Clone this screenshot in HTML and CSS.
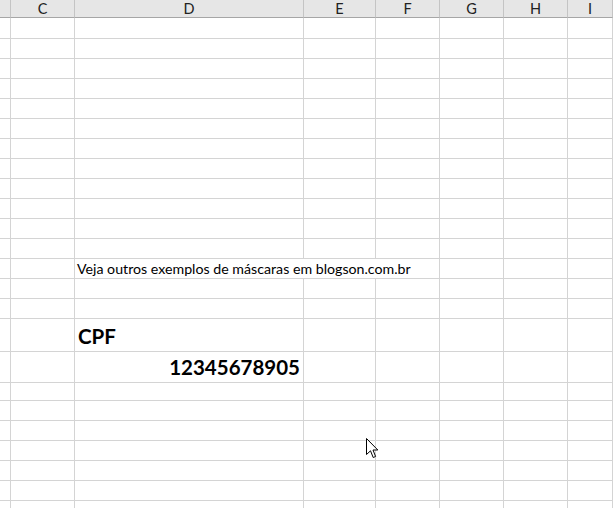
FILE: index.html
```
<!DOCTYPE html>
<html>
<head>
<meta charset="utf-8">
<link rel="stylesheet" href="styles.css">
</head>
<body>
<div class="sheet">
  <div class="row head">
    <span class="c"></span><span class="c">C</span><span class="c">D</span><span class="c">E</span><span class="c">F</span><span class="c">G</span><span class="c">H</span><span class="c">I</span>
  </div>
  <div class="row first"><span class="c"></span><span class="c"></span><span class="c"></span><span class="c"></span><span class="c"></span><span class="c"></span><span class="c"></span><span class="c"></span></div>
  <div class="row"><span class="c"></span><span class="c"></span><span class="c"></span><span class="c"></span><span class="c"></span><span class="c"></span><span class="c"></span><span class="c"></span></div>
  <div class="row"><span class="c"></span><span class="c"></span><span class="c"></span><span class="c"></span><span class="c"></span><span class="c"></span><span class="c"></span><span class="c"></span></div>
  <div class="row"><span class="c"></span><span class="c"></span><span class="c"></span><span class="c"></span><span class="c"></span><span class="c"></span><span class="c"></span><span class="c"></span></div>
  <div class="row"><span class="c"></span><span class="c"></span><span class="c"></span><span class="c"></span><span class="c"></span><span class="c"></span><span class="c"></span><span class="c"></span></div>
  <div class="row"><span class="c"></span><span class="c"></span><span class="c"></span><span class="c"></span><span class="c"></span><span class="c"></span><span class="c"></span><span class="c"></span></div>
  <div class="row"><span class="c"></span><span class="c"></span><span class="c"></span><span class="c"></span><span class="c"></span><span class="c"></span><span class="c"></span><span class="c"></span></div>
  <div class="row"><span class="c"></span><span class="c"></span><span class="c"></span><span class="c"></span><span class="c"></span><span class="c"></span><span class="c"></span><span class="c"></span></div>
  <div class="row"><span class="c"></span><span class="c"></span><span class="c"></span><span class="c"></span><span class="c"></span><span class="c"></span><span class="c"></span><span class="c"></span></div>
  <div class="row"><span class="c"></span><span class="c"></span><span class="c"></span><span class="c"></span><span class="c"></span><span class="c"></span><span class="c"></span><span class="c"></span></div>
  <div class="row"><span class="c"></span><span class="c"></span><span class="c"></span><span class="c"></span><span class="c"></span><span class="c"></span><span class="c"></span><span class="c"></span></div>
  <div class="row"><span class="c"></span><span class="c"></span><span class="c"></span><span class="c"></span><span class="c"></span><span class="c"></span><span class="c"></span><span class="c"></span></div>
  <div class="row"><span class="c"></span><span class="c"></span><span class="c span3 note">Veja outros exemplos de máscaras em blogson.com.br</span><span class="c"></span><span class="c"></span><span class="c"></span></div>
  <div class="row"><span class="c"></span><span class="c"></span><span class="c"></span><span class="c"></span><span class="c"></span><span class="c"></span><span class="c"></span><span class="c"></span></div>
  <div class="row"><span class="c"></span><span class="c"></span><span class="c"></span><span class="c"></span><span class="c"></span><span class="c"></span><span class="c"></span><span class="c"></span></div>
  <div class="row tall"><span class="c"></span><span class="c"></span><span class="c big">CPF</span><span class="c"></span><span class="c"></span><span class="c"></span><span class="c"></span><span class="c"></span></div>
  <div class="row tall"><span class="c"></span><span class="c"></span><span class="c big num">12345678905</span><span class="c"></span><span class="c"></span><span class="c"></span><span class="c"></span><span class="c"></span></div>
  <div class="row"><span class="c"></span><span class="c"></span><span class="c"></span><span class="c"></span><span class="c"></span><span class="c"></span><span class="c"></span><span class="c"></span></div>
  <div class="row"><span class="c"></span><span class="c"></span><span class="c"></span><span class="c"></span><span class="c"></span><span class="c"></span><span class="c"></span><span class="c"></span></div>
  <div class="row"><span class="c"></span><span class="c"></span><span class="c"></span><span class="c"></span><span class="c"></span><span class="c"></span><span class="c"></span><span class="c"></span></div>
  <div class="row"><span class="c"></span><span class="c"></span><span class="c"></span><span class="c"></span><span class="c"></span><span class="c"></span><span class="c"></span><span class="c"></span></div>
  <div class="row"><span class="c"></span><span class="c"></span><span class="c"></span><span class="c"></span><span class="c"></span><span class="c"></span><span class="c"></span><span class="c"></span></div>
  <div class="row"><span class="c"></span><span class="c"></span><span class="c"></span><span class="c"></span><span class="c"></span><span class="c"></span><span class="c"></span><span class="c"></span></div>
  <div class="row"><span class="c"></span><span class="c"></span><span class="c"></span><span class="c"></span><span class="c"></span><span class="c"></span><span class="c"></span><span class="c"></span></div>
</div>
<svg class="cursor" width="13" height="21" viewBox="0 0 13 21">
  <path d="M0.5 0.5 L0.5 16.5 L4.5 12.8 L7.2 19.5 L9.6 18.5 L7 12 L11.8 12 Z" fill="#fff" stroke="#000" stroke-width="1" stroke-linejoin="miter"/>
</svg>
</body>
</html>
```
FILE: styles.css
```
html, body {
  margin: 0;
  padding: 0;
  background: #fff;
  overflow: hidden;
}
.sheet {
  width: 613px;
  height: 508px;
  overflow: hidden;
  font-family: Lato, "Liberation Sans", sans-serif;
  color: #000;
}
.row {
  display: grid;
  grid-template-columns: 11px 64px 229px 72px 64px 64px 64px 1fr;
  height: 20px;
}
.row.first { height: 21px; }
.row.tall { height: 31px; }
.c {
  border-right: 1px solid #d4d4d4;
  border-bottom: 1px solid #d4d4d4;
  box-sizing: border-box;
  white-space: nowrap;
  overflow: visible;
}
.head {
  height: 18px;
  background: #e6e6e6;
}
.head .c {
  border-right: 1px solid #c4c4c4;
  border-bottom: 1px solid #a6a6a6;
  font-size: 14.5px;
  line-height: 17px;
  text-align: center;
  color: #222;
}
.span3 { grid-column: span 3; }
.note {
  font-size: 14.2px;
  line-height: 19px;
  padding-left: 2px;
}
.big {
  font-weight: bold;
  font-size: 20.5px;
  line-height: 30px;
  padding: 2px 2px 0 3px;
  display: flex;
  align-items: flex-end;
}
.num {
  justify-content: flex-end;
  padding-right: 3px;
}
.cursor {
  position: absolute;
  left: 366px;
  top: 438px;
}
```
